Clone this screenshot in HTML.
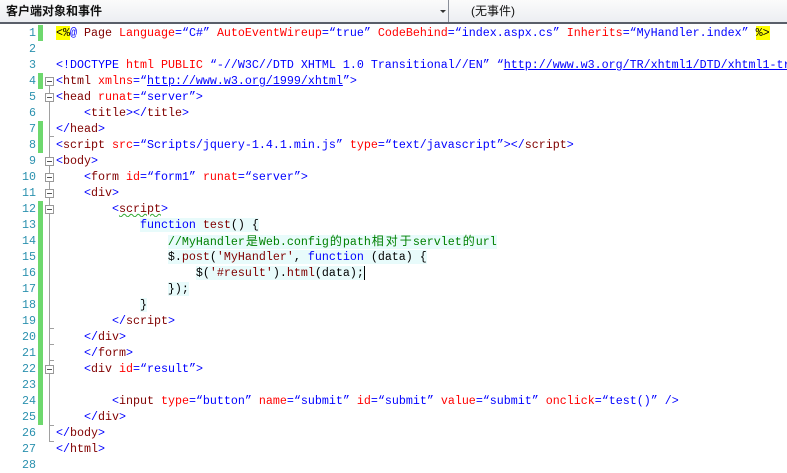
<!DOCTYPE html>
<html><head><meta charset="utf-8"><style>
*{margin:0;padding:0;box-sizing:border-box}
body{width:787px;height:469px;background:#fff;overflow:hidden;position:relative;font-family:"Liberation Mono","Noto Sans CJK SC",monospace;}
.hdr{position:absolute;left:0;top:0;width:787px;height:24px;background:linear-gradient(#fbfbfb,#eceef2);border-bottom:2px solid #5a5f6a;}
.dd1{position:absolute;left:0;top:0;width:449px;height:22px;border-right:1px solid #8a8f99;font-family:"Liberation Sans","Noto Sans CJK SC",sans-serif;font-size:12px;font-weight:bold;line-height:22px;padding-left:6px;color:#111}
.arr{position:absolute;left:440px;top:10px;width:0;height:0;border-left:3px solid transparent;border-right:3px solid transparent;border-top:3px solid #333}
.dd2{position:absolute;left:471px;top:0;height:22px;font-family:"Liberation Sans","Noto Sans CJK SC",sans-serif;font-size:12px;line-height:22px;color:#111}
.ln{position:absolute;left:0;width:36px;text-align:right;color:#2b91af;font-size:11.67px;height:16px;line-height:16px}
.cd{position:absolute;left:56px;width:731px;overflow:hidden;font-size:11.67px;height:16px;line-height:16px;white-space:pre;color:#000}
.g{position:absolute;left:38px;width:5px;background:#6ed86e}
.fb{position:absolute;left:45px;width:9px;height:9px;border:1px solid #999;background:#fff}
.fb:after{content:"";position:absolute;left:1px;top:3px;width:5px;height:1px;background:#555}
.vl{position:absolute;left:49px;width:1px;background:#a0a0a0}
.tk{position:absolute;left:49px;width:5px;height:1px;background:#a0a0a0}
.b{color:#0000ff}.r{color:#ff0000}.k{color:#800000}.c{color:#008000}
.u{text-decoration:underline;color:#0000ff}
.y{background:#ffff00;color:#000}
.j{display:inline-block;width:14px;text-align:center;font-family:"Noto Sans CJK SC",sans-serif;font-size:12px}
.sq{text-decoration:underline wavy #3a3;text-decoration-thickness:1px}
.hl{background:#e8fbfb}
</style></head><body>
<div class="hdr"><div class="dd1">客户端对象和事件<div class="arr"></div></div><div class="dd2">(无事件)</div></div>

<div class="g" style="top:25px;height:16px"></div>
<div class="g" style="top:73px;height:16px"></div>
<div class="g" style="top:121px;height:32px"></div>
<div class="g" style="top:201px;height:224px"></div>

<div class="vl" style="top:86px;height:356px"></div>
<div class="tk" style="top:136px"></div>
<div class="tk" style="top:441px"></div>
<div class="tk" style="top:425px"></div>
<div class="tk" style="top:328px"></div>
<div class="tk" style="top:344px"></div>
<div class="tk" style="top:360px"></div>
<div class="fb" style="top:77px"></div>
<div class="fb" style="top:93px"></div>
<div class="fb" style="top:157px"></div>
<div class="fb" style="top:173px"></div>
<div class="fb" style="top:189px"></div>
<div class="fb" style="top:205px"></div>
<div class="fb" style="top:365px"></div>

<div class="ln" style="top:25px">1</div><div class="cd" style="top:25px"><span class="y">&lt;%</span><span class="b">@</span> <span class="k">Page</span> <span class="r">Language</span><span class="b">=“C#”</span> <span class="r">AutoEventWireup</span><span class="b">=“true”</span> <span class="r">CodeBehind</span><span class="b">=“index.aspx.cs”</span> <span class="r">Inherits</span><span class="b">=“MyHandler.index”</span> <span class="y">%&gt;</span></div>
<div class="ln" style="top:41px">2</div>
<div class="ln" style="top:57px">3</div><div class="cd" style="top:57px"><span class="b">&lt;!DOCTYPE</span> <span class="r">html</span> <span class="r">PUBLIC</span> <span class="b">“-//W3C//DTD XHTML 1.0 Transitional//EN”</span> <span class="b">“</span><span class="u">http://www.w3.org/TR/xhtml1/DTD/xhtml1-transitional.dtd</span></div>
<div class="ln" style="top:73px">4</div><div class="cd" style="top:73px"><span class="b">&lt;</span><span class="k">html</span> <span class="r">xmlns</span><span class="b">=“</span><span class="u">http://www.w3.org/1999/xhtml</span><span class="b">”&gt;</span></div>
<div class="ln" style="top:89px">5</div><div class="cd" style="top:89px"><span class="b">&lt;</span><span class="k">head</span> <span class="r">runat</span><span class="b">=“server”&gt;</span></div>
<div class="ln" style="top:105px">6</div><div class="cd" style="top:105px">    <span class="b">&lt;</span><span class="k">title</span><span class="b">&gt;&lt;/</span><span class="k">title</span><span class="b">&gt;</span></div>
<div class="ln" style="top:121px">7</div><div class="cd" style="top:121px"><span class="b">&lt;/</span><span class="k">head</span><span class="b">&gt;</span></div>
<div class="ln" style="top:137px">8</div><div class="cd" style="top:137px"><span class="b">&lt;</span><span class="k">script</span> <span class="r">src</span><span class="b">=“Scripts/jquery-1.4.1.min.js”</span> <span class="r">type</span><span class="b">=“text/javascript”&gt;&lt;/</span><span class="k">script</span><span class="b">&gt;</span></div>
<div class="ln" style="top:153px">9</div><div class="cd" style="top:153px"><span class="b">&lt;</span><span class="k">body</span><span class="b">&gt;</span></div>
<div class="ln" style="top:169px">10</div><div class="cd" style="top:169px">    <span class="b">&lt;</span><span class="k">form</span> <span class="r">id</span><span class="b">=“form1”</span> <span class="r">runat</span><span class="b">=“server”&gt;</span></div>
<div class="ln" style="top:185px">11</div><div class="cd" style="top:185px">    <span class="b">&lt;</span><span class="k">div</span><span class="b">&gt;</span></div>
<div class="ln" style="top:201px">12</div><div class="cd" style="top:201px">        <span class="b">&lt;</span><span class="k sq">script</span><span class="b">&gt;</span></div>
<div class="ln" style="top:217px">13</div><div class="cd" style="top:217px">            <span class="hl"><span class="b">function</span> <span class="k">test</span>() {</span></div>
<div class="ln" style="top:233px">14</div><div class="cd" style="top:233px">                <span class="c hl">//MyHandler<span class="j">是</span>Web.config<span class="j">的</span>path<span class="j">相</span><span class="j">对</span><span class="j">于</span>servlet<span class="j">的</span>url</span></div>
<div class="ln" style="top:249px">15</div><div class="cd" style="top:249px">                <span class="hl">$.<span class="k">post</span>(<span class="k">'MyHandler'</span>, <span class="b">function</span> (data) {</span></div>
<div class="ln" style="top:265px">16</div><div class="cd" style="top:265px">                    <span class="hl">$(<span class="k">'#result'</span>).<span class="k">html</span>(data);</span><span style="border-left:1px solid #000"></span></div>
<div class="ln" style="top:281px">17</div><div class="cd" style="top:281px">                <span class="hl">});</span></div>
<div class="ln" style="top:297px">18</div><div class="cd" style="top:297px">            <span class="hl">}</span></div>
<div class="ln" style="top:313px">19</div><div class="cd" style="top:313px">        <span class="b">&lt;/</span><span class="k">script</span><span class="b">&gt;</span></div>
<div class="ln" style="top:329px">20</div><div class="cd" style="top:329px">    <span class="b">&lt;/</span><span class="k">div</span><span class="b">&gt;</span></div>
<div class="ln" style="top:345px">21</div><div class="cd" style="top:345px">    <span class="b">&lt;/</span><span class="k">form</span><span class="b">&gt;</span></div>
<div class="ln" style="top:361px">22</div><div class="cd" style="top:361px">    <span class="b">&lt;</span><span class="k">div</span> <span class="r">id</span><span class="b">=“result”&gt;</span></div>
<div class="ln" style="top:377px">23</div>
<div class="ln" style="top:393px">24</div><div class="cd" style="top:393px">        <span class="b">&lt;</span><span class="k">input</span> <span class="r">type</span><span class="b">=“button”</span> <span class="r">name</span><span class="b">=“submit”</span> <span class="r">id</span><span class="b">=“submit”</span> <span class="r">value</span><span class="b">=“submit”</span> <span class="r">onclick</span><span class="b">=“test()”</span> <span class="b">/&gt;</span></div>
<div class="ln" style="top:409px">25</div><div class="cd" style="top:409px">    <span class="b">&lt;/</span><span class="k">div</span><span class="b">&gt;</span></div>
<div class="ln" style="top:425px">26</div><div class="cd" style="top:425px"><span class="b">&lt;/</span><span class="k">body</span><span class="b">&gt;</span></div>
<div class="ln" style="top:441px">27</div><div class="cd" style="top:441px"><span class="b">&lt;/</span><span class="k">html</span><span class="b">&gt;</span></div>
<div class="ln" style="top:457px">28</div>
</body></html>
